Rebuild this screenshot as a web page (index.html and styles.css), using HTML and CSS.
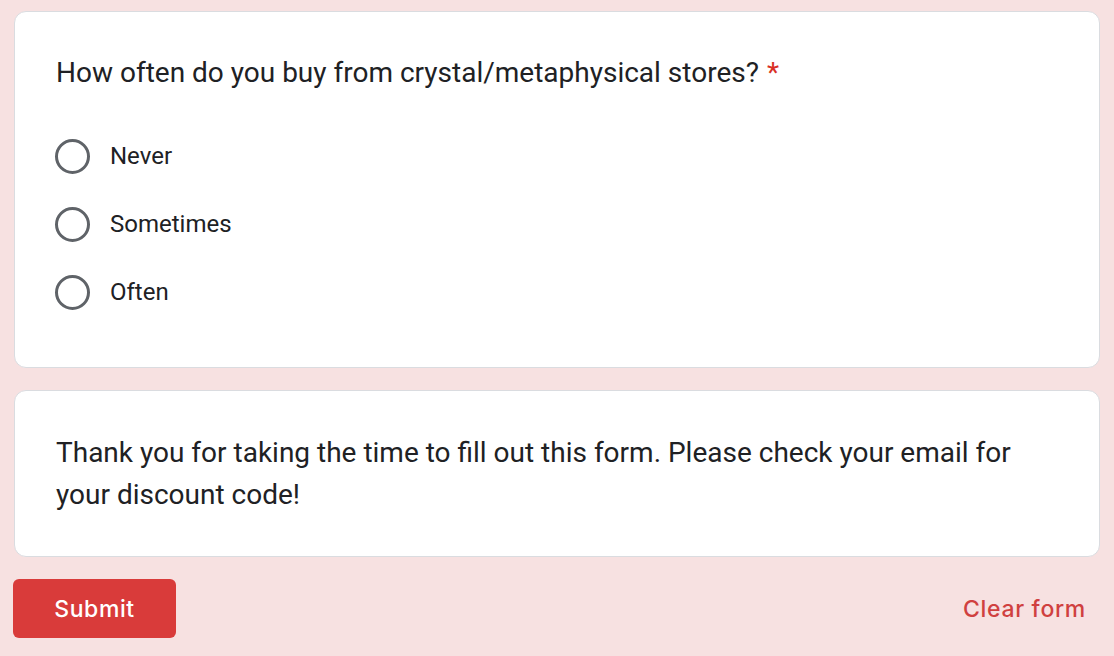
FILE: index.html
```html
<!DOCTYPE html>
<html>
<head>
<meta charset="utf-8">
<link rel="stylesheet" href="styles.css">
</head>
<body>
<main class="form">
  <section class="card question-card">
    <div class="question">How often do you buy from crystal/metaphysical stores?<span class="req">*</span></div>
    <div class="options">
      <label class="option"><span class="radio"></span><span class="opt-label">Never</span></label>
      <label class="option"><span class="radio"></span><span class="opt-label">Sometimes</span></label>
      <label class="option"><span class="radio"></span><span class="opt-label">Often</span></label>
    </div>
  </section>
  <section class="card message-card">
    <p class="message">Thank you for taking the time to fill out this form. Please check your email for your discount code!</p>
  </section>
  <div class="actions">
    <button class="submit">Submit</button>
    <button class="clear">Clear form</button>
  </div>
</main>
</body>
</html>
```

FILE: styles.css
```css
html, body {
  margin: 0;
  padding: 0;
  background: #f7e1e1;
}
body {
  font-family: Roboto, "Liberation Sans", sans-serif;
  color: #202124;
}
.form {
  width: 1086px;
  margin-left: 14px;
  padding-top: 11px;
  display: flex;
  flex-direction: column;
  gap: 22px;
}
.card {
  background: #fff;
  border: 1px solid #dadce0;
  border-radius: 12px;
  box-sizing: border-box;
}
.question-card {
  height: 357px;
  padding: 43px 41px 0 41px;
}
.question {
  font-size: 28px;
  line-height: 36px;
}
.req {
  color: #d93025;
  margin-left: 8px;
}
.options {
  margin-top: 31px;
  display: flex;
  flex-direction: column;
}
.option {
  height: 68px;
  display: flex;
  align-items: center;
}
.radio {
  width: 35px;
  height: 35px;
  box-sizing: border-box;
  border: 3px solid #5f6368;
  border-radius: 50%;
  margin-left: -1px;
}
.opt-label {
  margin-left: 20px;
  font-size: 24px;
}
.message-card {
  height: 167px;
  padding: 41px 41px 0 41px;
}
.message {
  margin: 0;
  font-size: 28px;
  line-height: 42px;
}
.actions {
  display: flex;
  justify-content: space-between;
  align-items: center;
}
.submit {
  margin-left: -1px;
  width: 163px;
  height: 59px;
  border: none;
  border-radius: 6px;
  background: #d93b3a;
  color: #fff;
  font-family: Inter, Roboto, sans-serif;
  font-weight: 500;
  font-size: 23px;
  letter-spacing: 0.6px;
  cursor: pointer;
}
.clear {
  border: none;
  background: none;
  color: #d0403f;
  font-family: Inter, Roboto, sans-serif;
  font-weight: 500;
  font-size: 23px;
  letter-spacing: 0.7px;
  padding: 0 14px 0 0;
  cursor: pointer;
}
```
